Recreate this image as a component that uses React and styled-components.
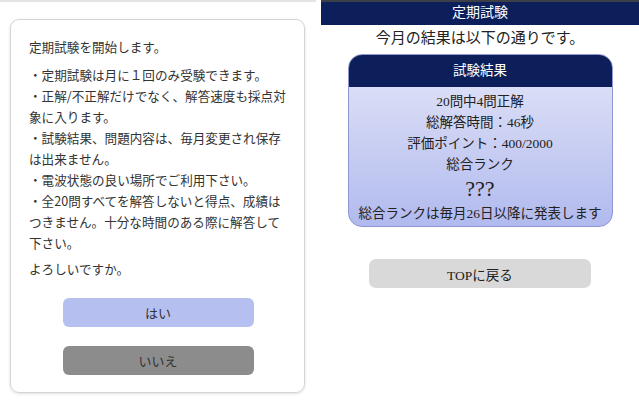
import React from 'react';
import styled, { createGlobalStyle } from 'styled-components';

// Global

const GlobalStyle = createGlobalStyle`
    * { box-sizing: border-box; }
    html, body {
        margin: 0;
        padding: 0;
        background: #fff;
    }
    body {
        width: 639px;
        height: 400px;
        overflow: hidden;
    }
`

// Styles

const Screen = styled.div`
    display: flex;
    width: 639px;
    height: 400px;
    gap: 5px;
`

const ConfirmPane = styled.div`
    width: 316px;
    height: 400px;
    border-top: 2px solid #e4e4e4;
    padding: 17px 11px 0 10px;
    font-family: "Noto Sans CJK JP", "Noto Sans", sans-serif;
    color: #333;
`

const Card = styled.div`
    height: 374px;
    border: 1px solid #d4d4d4;
    border-radius: 9px;
    box-shadow: 0 1px 3px rgba(0, 0, 0, 0.12);
    padding: 16px 17px 17px 18px;
    display: flex;
    flex-direction: column;
`

const Para = styled.p`
    margin: 0 0 ${p => p.gap ?? 6}px 0;
    font-size: 12.6px;
    line-height: 21px;
`

const Actions = styled.div`
    display: flex;
    flex-direction: column;
    align-items: center;
    gap: 19px;
    margin-top: 19px;
`

const Choice = styled.button`
    width: 191px;
    height: 29px;
    border: none;
    border-radius: 6px;
    background: ${p => p.bg};
    color: #333;
    font-family: "Noto Sans CJK JP", sans-serif;
    font-size: 13px;
    padding: 0;
`

const ResultPane = styled.div`
    width: 318px;
    display: flex;
    flex-direction: column;
    align-items: center;
    font-family: "Liberation Serif", "Noto Sans CJK JP", serif;
    color: #222;
`

const TitleBar = styled.div`
    width: 100%;
    height: 25px;
    background: #0c1f5b;
    border-top: 2px solid #3c3f48;
    color: #fff;
    font-size: 14px;
    line-height: 22px;
    text-align: center;
`

const Lead = styled.div`
    font-size: 15px;
    line-height: 26px;
    margin-bottom: 3px;
`

const ResultBox = styled.div`
    width: 265px;
    border: 1px solid #8d96cf;
    border-radius: 14px;
    overflow: hidden;
    background: linear-gradient(#e4e6f8, #b1baee);
`

const BoxHead = styled.div`
    height: 32px;
    background: #0c1f5b;
    color: #fff;
    font-size: 13.5px;
    line-height: 32px;
    text-align: center;
`

const BoxBody = styled.div`
    padding: 4px 0 2px;
    text-align: center;
`

const Line = styled.div`
    font-size: ${p => p.size || 13.5}px;
    line-height: ${p => p.lh || 21}px;
`

// full-width colon, kept centred in its own em box
const Colon = styled.span`
    display: inline-block;
    width: 1em;
    line-height: 1;
    text-align: center;
    font-family: "Noto Sans CJK JP", sans-serif;
`

const BackButton = styled.button`
    margin-top: 32px;
    width: 222px;
    height: 29px;
    border: none;
    border-radius: 7px;
    background: #d9d9d9;
    color: #222;
    font-family: "Liberation Serif", "Noto Sans CJK JP", serif;
    font-size: 13.5px;
    padding: 0;
`

const App = () => {
    return (
        <>
            <GlobalStyle />
            <Screen>
                <ConfirmPane>
                    <Card>
                        <Para gap={7}>定期試験を開始します。</Para>
                        <Para gap={0}>・定期試験は月に１回のみ受験できます。</Para>
                        <Para gap={0}>・正解/不正解だけでなく、解答速度も採点対象に入ります。</Para>
                        <Para gap={0}>・試験結果、問題内容は、毎月変更され保存は出来ません。</Para>
                        <Para gap={0}>・電波状態の良い場所でご利用下さい。</Para>
                        <Para gap={5}>・全20問すべてを解答しないと得点、成績はつきません。十分な時間のある際に解答して下さい。</Para>
                        <Para gap={0}>よろしいですか。</Para>
                        <Actions>
                            <Choice bg="#b6c0f0">はい</Choice>
                            <Choice bg="#8c8c8c">いいえ</Choice>
                        </Actions>
                    </Card>
                </ConfirmPane>
                <ResultPane>
                    <TitleBar>定期試験</TitleBar>
                    <Lead>今月の結果は以下の通りです。</Lead>
                    <ResultBox>
                        <BoxHead>試験結果</BoxHead>
                        <BoxBody>
                            <Line>20問中4問正解</Line>
                            <Line>総解答時間<Colon>：</Colon>46秒</Line>
                            <Line>評価ポイント<Colon>：</Colon>400/2000</Line>
                            <Line>総合ランク</Line>
                            <Line size={22} lh={28}>???</Line>
                            <Line>総合ランクは毎月26日以降に発表します</Line>
                        </BoxBody>
                    </ResultBox>
                    <BackButton>TOPに戻る</BackButton>
                </ResultPane>
            </Screen>
        </>
    )
}

export default App;
